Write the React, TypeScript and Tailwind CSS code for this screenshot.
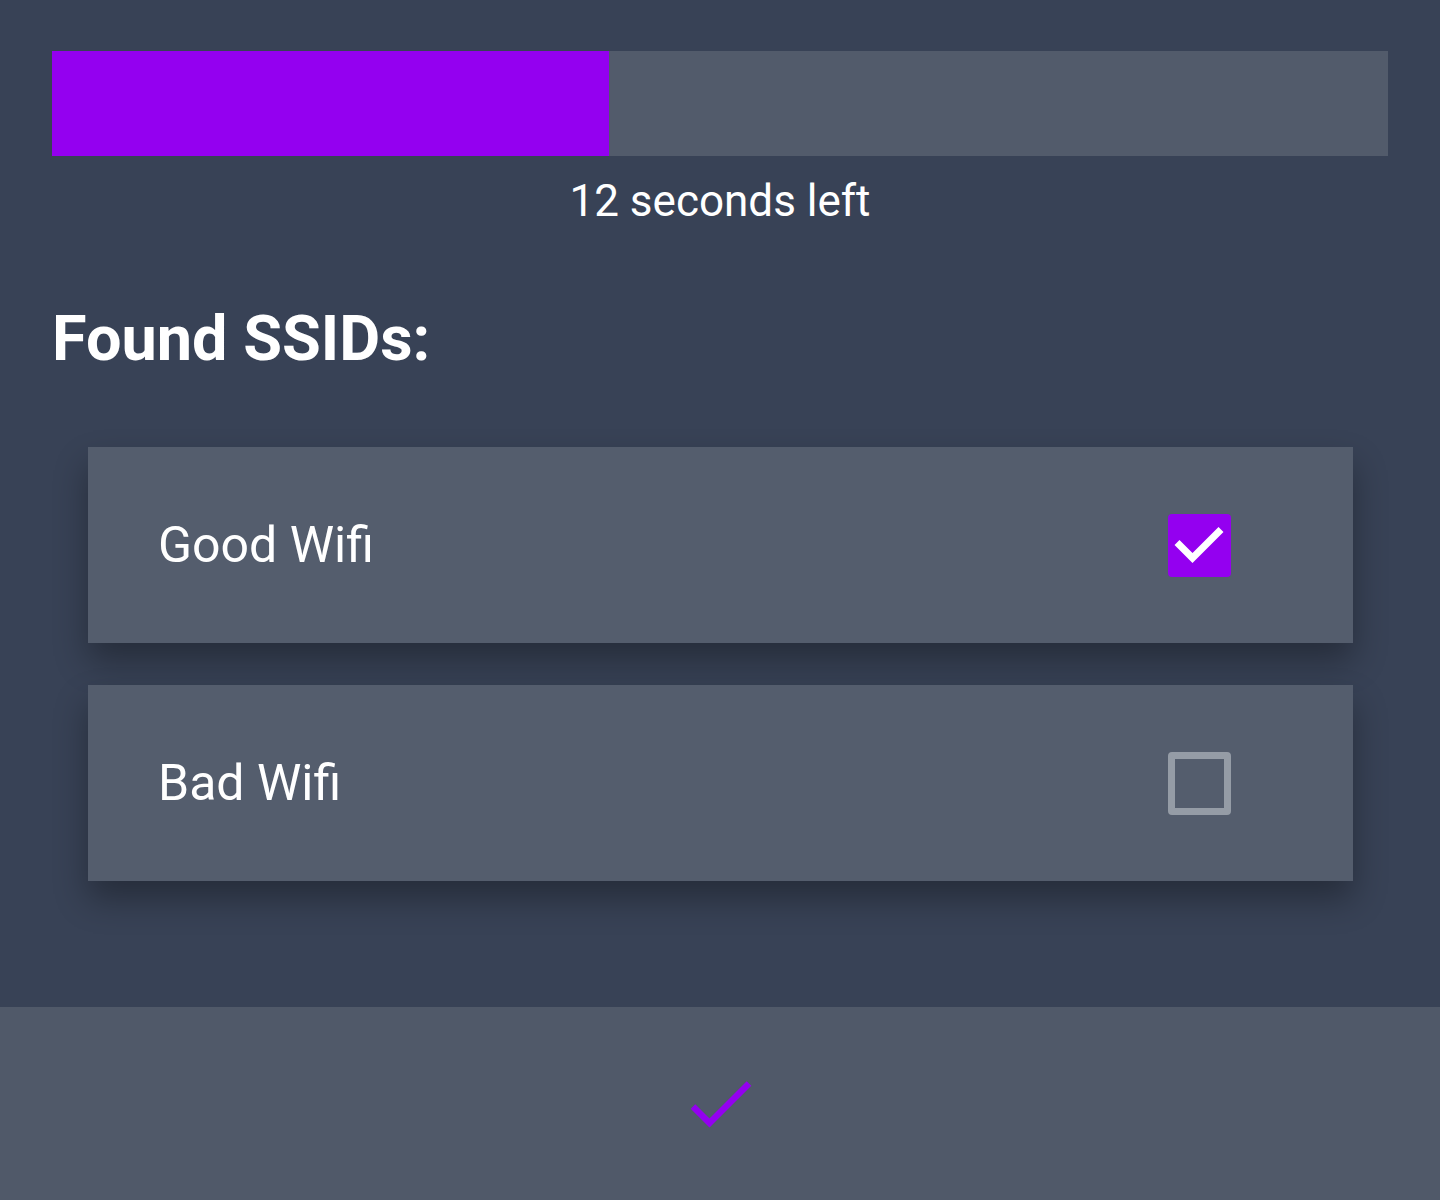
import { useState } from "react";

const networks = ["Good Wifi", "Bad Wifi"];

function Network({ name, initial }: { name: string; initial: boolean }) {
  const [checked, setChecked] = useState(initial);
  return (
    <li>
      <label className="flex h-[196px] cursor-pointer items-center justify-between bg-[#545d6d] pr-[122px] pl-[70px] shadow-[0_18px_32px_0_rgba(0,0,0,0.32)]">
        <span className="text-[50px] leading-[60px]">{name}</span>
        <span className="grid size-[63px] place-items-center">
          <input
            type="checkbox"
            checked={checked}
            onChange={(e) => setChecked(e.target.checked)}
            className="peer col-start-1 row-start-1 size-[63px] appearance-none rounded-[4px] border-[7px] border-[#959ca6] checked:border-[#9400f0] checked:bg-[#9400f0]"
          />
          <svg viewBox="0 0 63 63" className="pointer-events-none invisible col-start-1 row-start-1 size-[63px] peer-checked:visible" fill="none" stroke="#fff" strokeWidth="7" aria-hidden="true">
            <path d="M9 28.500 L24.500 44 L53 15.500" />
          </svg>
        </span>
      </label>
    </li>
  );
}

export default function App() {
  return (
    <div className="flex min-h-screen flex-col bg-[#384256] font-['Roboto',sans-serif] text-white">
      <main className="flex-1 px-[52px] pt-[51px]">
        <div role="progressbar" aria-label="Scan progress" aria-valuenow={12} aria-valuemin={0} aria-valuemax={20} className="h-[105px] bg-[#525b6b]">
          <div className="h-full w-5/12 bg-[#9400f0]" />
        </div>
        <p className="mt-[19px] text-center text-[44px] leading-[52px]">12 seconds left</p>
        <h1 className="mt-[74px] text-[63px] leading-[76px] font-bold">Found SSIDs:</h1>
        <ul className="mt-[70px] mr-[35px] ml-[36px] flex flex-col gap-[42px]">
          {networks.map((name, i) => (
            <Network key={name} name={name} initial={i === 0} />
          ))}
        </ul>
      </main>
      <button type="button" aria-label="Confirm" className="flex h-[193px] w-full items-center justify-center bg-[#505969]">
        <svg viewBox="0 0 64 64" className="size-16" fill="none" stroke="#9400f0" strokeWidth="6.500" aria-hidden="true">
          <path d="M5 34.500 L21.500 51 L61 11.500" />
        </svg>
      </button>
    </div>
  );
}
